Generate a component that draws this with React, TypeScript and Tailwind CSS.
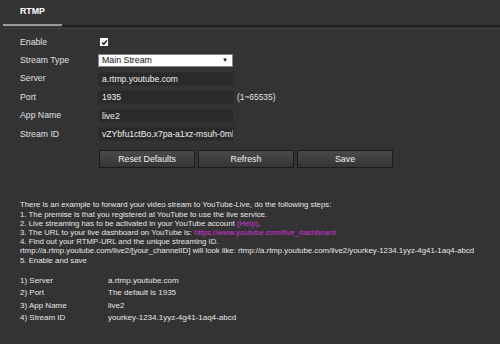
import React from "react";

const Row = ({ label, children }: { label: string; children: React.ReactNode }) => (
  <div className="flex h-[18.4px] items-center">
    <div className="w-[78px] shrink-0">{label}</div>
    {children}
  </div>
);

const Field = ({ value }: { value: string }) => (
  <div className="h-[14px] w-[136px] overflow-hidden whitespace-nowrap border border-[#2f2f2f] bg-[#2a2a2a] px-[3px] text-[8.6px] leading-[12px] text-[#f0f0f0]">
    {value}
  </div>
);

const Btn = ({ label }: { label: string }) => (
  <div className="flex h-[18px] w-[96px] items-center justify-center border border-[#1c1c1c] bg-gradient-to-b from-[#4a4a4a] to-[#353535] text-[#f0f0f0]">
    {label}
  </div>
);

export default function App() {
  return (
    <div
      className="h-[344px] w-[500px] overflow-hidden bg-[#333333] text-[8.7px] text-[#e0e0e0]"
      style={{ fontFamily: '"Liberation Sans", Arial, sans-serif' }}
    >
      <div className="relative h-[29px] border-b border-[#3c3c3c]">
        <div className="absolute left-[3px] top-0 flex h-[26px] w-[59px] items-start pl-[17px] pt-[5px] border-b-2 border-[#9a9a9a] text-[8.8px] font-bold text-white">
          RTMP
        </div>
        <div className="absolute left-[62px] right-0 top-[25px] h-[2px] bg-[#1e1e1e]" />
      </div>
      <div className="px-[20px] pt-[4px]">
        <Row label="Enable">
          <div className="ml-[2px] flex h-[8px] w-[8px] items-center justify-center bg-white">
            <svg width="7" height="7" viewBox="0 0 8 8">
              <path d="M1.2 4 L3.2 6 L6.8 1.5" stroke="#111" strokeWidth="1.6" fill="none" />
            </svg>
          </div>
        </Row>
        <Row label="Stream Type">
          <div className="flex h-[13px] w-[135px] items-center justify-between border border-[#888] bg-white pl-[3px] pr-[4px] text-[8.8px] text-[#111]">
            <span>Main Stream</span>
            <span className="text-[6px]">▼</span>
          </div>
        </Row>
        <Row label="Server">
          <Field value="a.rtmp.youtube.com" />
        </Row>
        <Row label="Port">
          <Field value="1935" />
          <span className="ml-[3px] text-[8.4px]">(1~65535)</span>
        </Row>
        <Row label="App Name">
          <Field value="live2" />
        </Row>
        <Row label="Stream ID">
          <Field value="vZYbfu1ctBo.x7pa-a1xz-msuh-0ml" />
        </Row>
        <div className="ml-[79px] mt-[7px] flex gap-[3px] text-[8.8px]">
          <Btn label="Reset Defaults" />
          <Btn label="Refresh" />
          <Btn label="Save" />
        </div>
        <div className="mt-[32px] text-[7.8px] leading-[9.2px] text-[#e6e6e6]">
          <div>There is an example to forward your video stream to YouTube-Live, do the following steps:</div>
          <div>1. The premise is that you registered at YouTube to use the live service.</div>
          <div>
            2. Live streaming has to be activated in your YouTube account <span className="text-[#d030d8]">(Help)</span>.
          </div>
          <div>
            3. The URL to your live dashboard on YouTube is:{" "}
            <span className="text-[#d030d8]">https://www.youtube.com/live_dashboard</span>
          </div>
          <div>4. Find out your RTMP-URL and the unique streaming ID.</div>
          <div className="whitespace-nowrap">
            rtmp://a.rtmp.youtube.com/live2/[your_channelID] will look like: rtmp://a.rtmp.youtube.com/live2/yourkey-1234.1yyz-4g41-1aq4-abcd
          </div>
          <div>5. Enable and save</div>
        </div>
        <div className="mt-[10px] text-[8px] leading-[12.5px] text-[#e6e6e6]">
          {[
            ["1) Server", "a.rtmp.youtube.com"],
            ["2) Port", "The default is 1935"],
            ["3) App Name", "live2"],
            ["4) Stream ID", "yourkey-1234.1yyz-4g41-1aq4-abcd"],
          ].map(([a, b]) => (
            <div key={a} className="flex">
              <div className="w-[88px]">{a}</div>
              <div>{b}</div>
            </div>
          ))}
        </div>
      </div>
    </div>
  );
}
